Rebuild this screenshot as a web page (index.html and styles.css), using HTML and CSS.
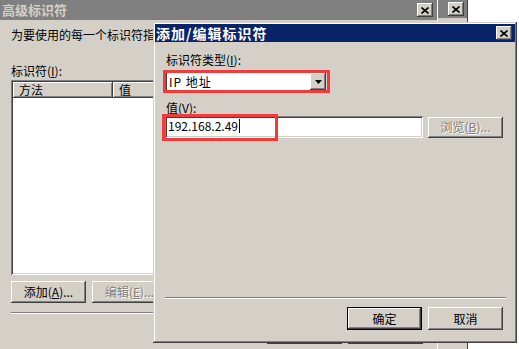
FILE: index.html
```html
<!DOCTYPE html>
<html lang="zh-CN">
<head>
    <meta charset="UTF-8">
    <title>添加/编辑标识符</title>
    <link rel="stylesheet" href="styles.css">
</head>
<body>
    <!-- rear window, only its caption end shows -->
    <div class="win win-rear">
        <div class="titlebar inactive">
            <span class="cap-btn"><svg width="8" height="7" viewBox="0 0 8 7"><path d="M0.5 0.5L7.5 6.5M7.5 0.5L0.5 6.5" stroke="#000" stroke-width="1.6"/></svg></span>
        </div>
    </div>

    <!-- 高级标识符 -->
    <div class="win win-adv">
        <div class="titlebar inactive">
            <span class="title">高级标识符</span>
            <span class="cap-btn"><svg width="8" height="7" viewBox="0 0 8 7"><path d="M0.5 0.5L7.5 6.5M7.5 0.5L0.5 6.5" stroke="#000" stroke-width="1.6"/></svg></span>
        </div>
        <div class="adv-body">
            <p class="adv-intro">为要使用的每一个标识符指</p>
            <div class="lbl adv-lbl">标识符(<u>I</u>):</div>
            <div class="listview">
                <div class="lv-head">
                    <span class="lv-col lv-c1">方法</span>
                    <span class="lv-col lv-c2">值</span>
                </div>
            </div>
            <div class="adv-btns">
                <button class="btn">添加(<u>A</u>)...</button>
                <button class="btn" disabled>编辑(<u>E</u>)...</button>
            </div>
            <div class="sep"></div>
            <!-- hidden behind the dialog, only the bottom edges show -->
            <div class="adv-foot">
                <span class="btn"></span>
                <span class="btn"></span>
            </div>
        </div>
    </div>

    <!-- 添加/编辑标识符 -->
    <div class="win dlg">
        <div class="titlebar active">
            <span class="title">添加/编辑标识符</span>
            <span class="cap-btn"><svg width="8" height="7" viewBox="0 0 8 7"><path d="M0.5 0.5L7.5 6.5M7.5 0.5L0.5 6.5" stroke="#000" stroke-width="1.6"/></svg></span>
        </div>
        <div class="dlg-body">
            <div class="lbl lbl-type">标识符类型(<u>I</u>):</div>
            <div class="combo">
                <span class="combo-text">IP 地址</span>
                <span class="combo-btn"><svg width="7" height="4" viewBox="0 0 7 4"><path d="M0 0h7L3.5 4z" fill="#000"/></svg></span>
                <span class="mark mark-combo"></span>
            </div>
            <div class="lbl lbl-val">值(<u>V</u>):</div>
            <div class="val-row">
                <div class="field">192.168.2.49<span class="caret"></span></div>
                <button class="btn" disabled>浏览(<u>B</u>)...</button>
                <span class="mark mark-ip"></span>
            </div>
            <div class="dlg-foot">
                <div class="sep"></div>
                <div class="foot-btns">
                    <button class="btn btn-default">确定</button>
                    <button class="btn">取消</button>
                </div>
            </div>
        </div>
    </div>
</body>
</html>
```

FILE: styles.css
```css
* {
    box-sizing: border-box;
}
body {
    margin: 0;
    width: 519px;
    height: 349px;
    overflow: hidden;
    position: relative;
    background-color: #fff;
    font-family: "Noto Sans CJK SC", "Liberation Sans", sans-serif;
    font-size: 12px;
    line-height: 14px;
    color: #000;
}
u {
    text-decoration: underline;
}
.win {
    position: absolute;
    background-color: #d4d0c8;
}

/* caption bars */
.titlebar {
    display: flex;
    align-items: center;
    justify-content: space-between;
}
.titlebar.inactive {
    background-color: #808080;
    color: #d4d0c8;
}
.titlebar.active {
    background-color: #0a246a;
    color: #fff;
}
.title {
    font-weight: bold;
    white-space: nowrap;
}
.cap-btn {
    width: 16px;
    height: 14px;
    display: flex;
    align-items: center;
    justify-content: center;
    background-color: #d4d0c8;
    box-shadow: inset -1px -1px #404040, inset 1px 1px #fff, inset -2px -2px #808080;
}

/* rear window */
.win-rear {
    left: 0;
    top: 0;
    width: 468px;
    height: 349px;
    border-right: 1px solid #404040;
}
.win-rear .titlebar {
    height: 18px;
    justify-content: flex-end;
    padding-right: 3px;
}

/* advanced identifiers window */
.win-adv {
    left: 0;
    top: 0;
    width: 438px;
    height: 349px;
    border-right: 1px solid #fff;
}
.win-adv .titlebar {
    height: 20px;
    padding: 0 4px 0 2px;
}
.win-adv .title {
    font-size: 13px;
}
.adv-body {
    padding: 0 14px 0 11px;
    display: flex;
    flex-direction: column;
}
.adv-intro {
    margin: 8px 0 0;
    width: 142px;
    white-space: nowrap;
    overflow: hidden;
}
.adv-lbl {
    margin-top: 22px;
}
.listview {
    margin-top: 2px;
    height: 195px;
    background-color: #fff;
    padding: 2px;
    box-shadow: inset 1px 1px #808080, inset -1px -1px #fff, inset 2px 2px #404040, inset -2px -2px #d4d0c8;
}
.lv-head {
    display: flex;
    height: 16px;
}
.lv-col {
    background-color: #d4d0c8;
    padding: 1px 6px 0;
    box-shadow: inset -1px -1px #404040, inset 1px 1px #fff, inset -2px -2px #808080;
}
.lv-c1 {
    width: 100px;
}
.lv-c2 {
    flex: 1;
}
.adv-btns {
    display: flex;
    gap: 6px;
    margin-top: 6px;
}
.win-adv .sep {
    margin-top: 9px;
}
.adv-foot {
    display: flex;
    justify-content: flex-end;
    gap: 6px;
    margin-top: 6px;
}
.adv-foot .btn {
    height: 24px;
}

/* buttons, fields */
.btn {
    width: 75px;
    height: 22px;
    padding: 0;
    border: none;
    background-color: #d4d0c8;
    font: inherit;
    color: #000;
    white-space: nowrap;
    overflow: hidden;
    box-shadow: inset -1px -1px #404040, inset 1px 1px #fff, inset -2px -2px #808080;
}
.btn:disabled {
    color: #808080;
    text-shadow: 1px 1px #fff;
}
.btn-default {
    border: 1px solid #000;
}
.sep {
    height: 2px;
    border-top: 1px solid #808080;
    border-bottom: 1px solid #fff;
}
.lbl {
    white-space: nowrap;
}

/* add / edit dialog */
.dlg {
    left: 153px;
    top: 22px;
    width: 364px;
    height: 321px;
    padding: 2px;
    display: flex;
    flex-direction: column;
    box-shadow: inset -1px -1px #404040, inset 1px 1px #d4d0c8, inset -2px -2px #808080, inset 2px 2px #fff;
}
.dlg .titlebar {
    height: 18px;
    padding: 0 3px 0 1px;
}
.dlg .title {
    font-size: 14px;
    letter-spacing: 1px;
}
.dlg-body {
    flex: 1;
    display: flex;
    flex-direction: column;
    padding: 0 10px 11px 10px;
}
.lbl-type {
    margin-top: 11px;
    padding-left: 1px;
}
.combo {
    position: relative;
    margin-top: 4px;
    width: 163px;
    height: 21px;
    padding: 2px;
    display: flex;
    align-items: center;
    background-color: #fff;
    box-shadow: inset 1px 1px #808080, inset -1px -1px #fff, inset 2px 2px #404040, inset -2px -2px #d4d0c8;
}
.combo-text {
    flex: 1;
    padding-left: 2px;
    letter-spacing: 1px;
}
.combo-btn {
    width: 16px;
    height: 17px;
    display: flex;
    align-items: center;
    justify-content: center;
    background-color: #d4d0c8;
    box-shadow: inset -1px -1px #404040, inset 1px 1px #fff, inset -2px -2px #808080;
}
.lbl-val {
    margin-top: 9px;
    padding-left: 1px;
}
.val-row {
    position: relative;
    margin-top: 1px;
    display: flex;
    gap: 5px;
    align-items: center;
}
.field {
    width: 258px;
    height: 22px;
    padding: 3px 3px 0;
    background-color: #fff;
    display: flex;
    align-items: flex-start;
    box-shadow: inset 1px 1px #808080, inset -1px -1px #fff, inset 2px 2px #404040, inset -2px -2px #d4d0c8;
}
.caret {
    width: 1px;
    height: 14px;
    margin-left: 1px;
    background-color: #000;
}
.val-row .btn {
    height: 21px;
}
.mark {
    position: absolute;
    border: 3px solid #f23b3b;
}
.mark-combo {
    left: -2px;
    top: -1px;
    width: 167px;
    height: 23px;
}
.mark-ip {
    left: -3px;
    top: -2px;
    width: 116px;
    height: 27px;
}
.dlg-foot {
    margin-top: auto;
}
.dlg-foot .sep {
    margin-right: -1px;
}
.foot-btns {
    display: flex;
    justify-content: flex-end;
    gap: 6px;
    margin-top: 8px;
    padding-right: 2px;
}
.foot-btns .btn {
    height: 23px;
}
```
